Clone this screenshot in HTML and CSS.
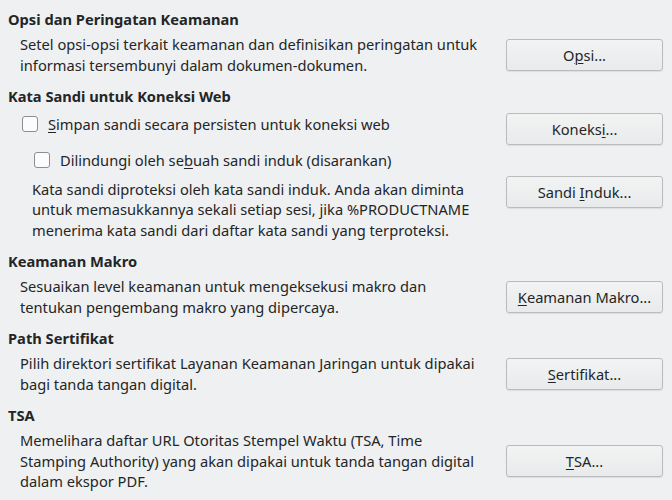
FILE: index.html
```html
<!DOCTYPE html>
<html lang="id">
<head>
  <meta charset="UTF-8">
  <meta name="viewport" content="width=device-width, initial-scale=1.0">
  <title>Keamanan</title>
  <link rel="stylesheet" href="styles.css">
</head>
<body>
  <div class="page">
    <section class="group">
      <h2 class="group-title">Opsi dan Peringatan Keamanan</h2>
      <div class="row">
        <p class="desc">Setel opsi-opsi terkait keamanan dan definisikan peringatan untuk<br>informasi tersembunyi dalam dokumen-dokumen.</p>
        <button type="button">O<u>p</u>si...</button>
      </div>
    </section>

    <section class="group">
      <h2 class="group-title">Kata Sandi untuk Koneksi Web</h2>
      <div class="row row-top">
        <div class="password-opts">
          <label class="check">
            <input type="checkbox">
            <span class="box"></span>
            <span><u>S</u>impan sandi secara persisten untuk koneksi web</span>
          </label>
          <label class="check check-sub">
            <input type="checkbox">
            <span class="box"></span>
            <span>Dilindungi oleh se<u>b</u>uah sandi induk (disarankan)</span>
          </label>
          <p class="desc desc-sub">Kata sandi diproteksi oleh kata sandi induk. Anda akan diminta<br>untuk memasukkannya sekali setiap sesi, jika %PRODUCTNAME<br>menerima kata sandi dari daftar kata sandi yang terproteksi.</p>
        </div>
        <div class="button-col">
          <button type="button">Koneks<u>i</u>...</button>
          <button type="button" class="btn-master">Sandi <u>I</u>nduk...</button>
        </div>
      </div>
    </section>

    <section class="group">
      <h2 class="group-title">Keamanan Makro</h2>
      <div class="row">
        <p class="desc">Sesuaikan level keamanan untuk mengeksekusi makro dan<br>tentukan pengembang makro yang dipercaya.</p>
        <button type="button"><u>K</u>eamanan Makro...</button>
      </div>
    </section>

    <section class="group">
      <h2 class="group-title">Path Sertifikat</h2>
      <div class="row">
        <p class="desc">Pilih direktori sertifikat Layanan Keamanan Jaringan untuk dipakai<br>bagi tanda tangan digital.</p>
        <button type="button"><u>S</u>ertifikat...</button>
      </div>
    </section>

    <section class="group group-tsa">
      <h2 class="group-title">TSA</h2>
      <div class="row">
        <p class="desc">Memelihara daftar URL Otoritas Stempel Waktu (TSA, Time<br>Stamping Authority) yang akan dipakai untuk tanda tangan digital<br>dalam ekspor PDF.</p>
        <button type="button"><u>T</u>SA...</button>
      </div>
    </section>
  </div>
</body>
</html>
```

FILE: styles.css
```css
body {
  margin: 0;
  background-color: #eff0f1;
  color: #232627;
  font-family: "Noto Sans", "Open Sans", sans-serif;
  font-size: 14.67px;
  line-height: 20.5px;
}
.page {
  padding: 9px 9px 0 8px;
}
.group {
  margin-bottom: 11px;
}
.group-tsa {
  margin-top: 2px;
}
.group-title {
  font-size: 14.67px;
  font-weight: 700;
  margin: 0 0 4.5px 0;
}
.row {
  display: flex;
  align-items: center;
  justify-content: space-between;
  padding-left: 12px;
}
.row-top {
  align-items: flex-start;
}
.desc {
  margin: 0;
  white-space: nowrap;
}
u {
  text-decoration-thickness: 1px;
  text-underline-offset: 2px;
}

/* buttons */
button {
  box-sizing: border-box;
  width: 157px;
  height: 32px;
  flex-shrink: 0;
  padding: 0 8px;
  border: 1px solid #b9bbbd;
  border-radius: 3px;
  background: linear-gradient(#f2f3f3, #e9eaeb);
  box-shadow: 0 1px 1px rgba(0, 0, 0, 0.08);
  color: #232627;
  font-family: inherit;
  font-size: 14.67px;
}
.button-col {
  display: flex;
  flex-direction: column;
  padding-top: 2px;
}
.btn-master {
  margin-top: 31px;
}

/* checkboxes */
.password-opts {
  display: flex;
  flex-direction: column;
  padding-top: 3px;
}
.check {
  display: flex;
  align-items: center;
  gap: 10px;
  padding-left: 2px;
}
.check input {
  display: none;
}
.box {
  box-sizing: border-box;
  width: 16px;
  height: 16px;
  border: 1px solid #8c8e90;
  border-radius: 3px;
  background-color: #fcfcfc;
}
.check-sub {
  margin-top: 15.5px;
  padding-left: 14px;
}
.desc-sub {
  margin-top: 8px;
  padding-left: 12px;
}
```
